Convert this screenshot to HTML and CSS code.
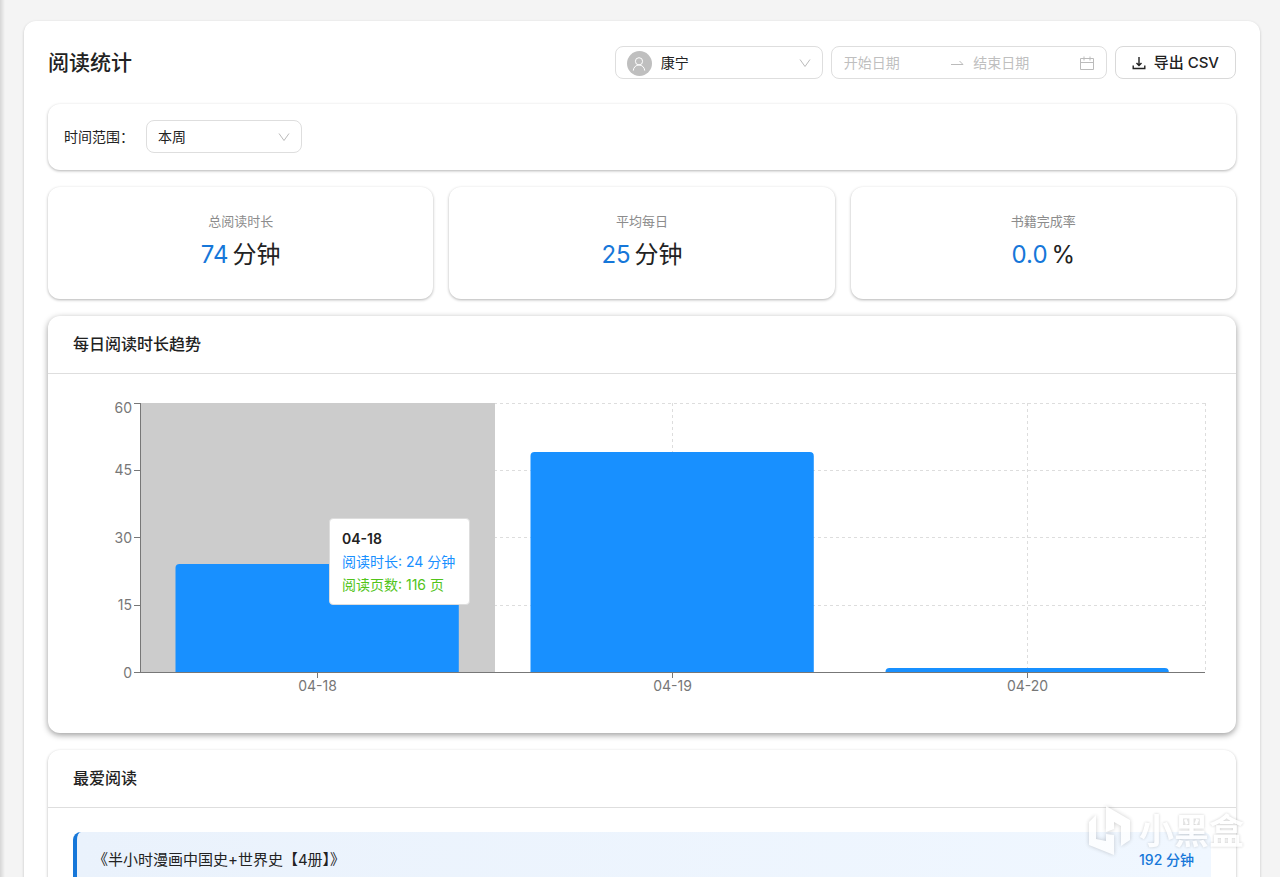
FILE: index.html
```html
<!DOCTYPE html>
<html lang="zh-CN">
<head>
    <meta charset="UTF-8">
    <meta name="viewport" content="width=device-width, initial-scale=1.0">
    <title>阅读统计</title>
    <link rel="stylesheet" href="styles.css">
</head>
<body>
    <main class="container">
        <header class="page-header">
            <h1>阅读统计</h1>
            <div class="toolbar">
                <div class="select-box profile-select">
                    <span class="avatar">
                        <svg viewBox="0 0 16 16" width="16" height="16"><circle cx="8" cy="5.3" r="3.6"/><path d="M2.3 14.6C2.5 11.3 5 9 8 9s5.500 2.300 5.700 5.600"/></svg>
                    </span>
                    <select aria-label="读者">
                        <option>康宁</option>
                    </select>
                    <svg class="chevron" viewBox="0 0 12 12"><path d="M1 2.500l5 7 5-7"/></svg>
                </div>
                <div class="date-range">
                    <input type="text" placeholder="开始日期" aria-label="开始日期">
                    <svg class="range-arrow" viewBox="0 0 14 14"><path d="M1 8.500h12L9.500 5"/></svg>
                    <input type="text" placeholder="结束日期" aria-label="结束日期">
                    <svg class="calendar-icon" viewBox="0 0 14 14"><path d="M.5 2.500h13v11H.5zM.5 6.500h13M4 .5v4M10 .5v4"/></svg>
                </div>
                <button class="export-btn" type="button">
                    <svg viewBox="0 0 14 14"><path d="M7 1v8M4.500 7L7 9.500 9.500 7M1.200 9.500v3h11.600v-3"/></svg>
                    <span>导出 CSV</span>
                </button>
            </div>
        </header>

        <section class="card filter-card">
            <label for="timeRange">时间范围：</label>
            <div class="select-box range-select">
                <select id="timeRange">
                    <option>本周</option>
                </select>
                <svg class="chevron" viewBox="0 0 12 12"><path d="M1 2.500l5 7 5-7"/></svg>
            </div>
        </section>

        <section class="stats">
            <div class="card stat">
                <div class="stat-label">总阅读时长</div>
                <div class="stat-value"><span class="number">74</span><span>分钟</span></div>
            </div>
            <div class="card stat">
                <div class="stat-label">平均每日</div>
                <div class="stat-value"><span class="number">25</span><span>分钟</span></div>
            </div>
            <div class="card stat">
                <div class="stat-label">书籍完成率</div>
                <div class="stat-value"><span class="number">0.0</span><span>%</span></div>
            </div>
        </section>

        <section class="card chart-card">
            <h2>每日阅读时长趋势</h2>
            <div class="chart-body">
                <div class="chart">
                    <svg class="plot" width="100%" height="269">
                        <g class="grid">
                            <line x1="0" y1="0" x2="100%" y2="0"/>
                            <line x1="0" y1="67" x2="100%" y2="67"/>
                            <line x1="0" y1="134" x2="100%" y2="134"/>
                            <line x1="0" y1="202" x2="100%" y2="202"/>
                            <line x1="50%" y1="0" x2="50%" y2="269"/>
                            <line x1="83.333%" y1="0" x2="83.333%" y2="269"/>
                            <line x1="100%" y1="0" x2="100%" y2="269"/>
                        </g>
                        <rect class="cursor" x="0" y="0" width="33.333%" height="269"/>
                        <!-- 内层 svg 裁掉柱子底部的圆角 -->
                        <svg class="bars" width="100%" height="269">
                            <rect x="3.333%" y="161" width="26.600%" height="120" rx="4"/>
                            <rect x="36.666%" y="49" width="26.600%" height="240" rx="4"/>
                            <rect x="70%" y="265" width="26.600%" height="20" rx="4"/>
                        </svg>
                        <g class="axis">
                            <line x1="0" y1="269" x2="100%" y2="269"/>
                            <line x1="0" y1="0" x2="0" y2="269"/>
                            <line x1="-6" y1="0" x2="0" y2="0"/>
                            <line x1="-6" y1="67" x2="0" y2="67"/>
                            <line x1="-6" y1="134" x2="0" y2="134"/>
                            <line x1="-6" y1="202" x2="0" y2="202"/>
                            <line x1="-6" y1="269" x2="0" y2="269"/>
                            <line x1="16.667%" y1="269" x2="16.667%" y2="275"/>
                            <line x1="50%" y1="269" x2="50%" y2="275"/>
                            <line x1="83.333%" y1="269" x2="83.333%" y2="275"/>
                        </g>
                        <g class="y-labels">
                            <text x="-8" y="10">60</text>
                            <text x="-8" y="72">45</text>
                            <text x="-8" y="140">30</text>
                            <text x="-8" y="207">15</text>
                            <text x="-8" y="275">0</text>
                        </g>
                        <g class="x-labels">
                            <text x="16.667%" y="288">04-18</text>
                            <text x="50%" y="288">04-19</text>
                            <text x="83.333%" y="288">04-20</text>
                        </g>
                    </svg>
                    <div class="tooltip">
                        <div class="tooltip-date">04-18</div>
                        <div class="tooltip-time">阅读时长: 24 分钟</div>
                        <div class="tooltip-pages">阅读页数: 116 页</div>
                    </div>
                </div>
            </div>
        </section>

        <section class="card favorite-card">
            <h2>最爱阅读</h2>
            <div class="favorite-body">
                <div class="book">
                    <span>《半小时漫画中国史+世界史【4册】》</span>
                    <span class="book-time">192 分钟</span>
                </div>
            </div>
        </section>
    </main>

    <div class="watermark">
        <svg viewBox="0 0 44 52"><path d="M8 10L1 17v23l25 10V30l-8-1v7L8 34zM18 1l24 14v20l-9 6V21l-7-4v7l-8 3z"/></svg>
        <span>小黑盒</span>
    </div>
</body>
</html>
```
FILE: styles.css
```css
* {
    box-sizing: border-box;
}
html {
    height: 100%;
    overflow: hidden;
}
body {
    font-family: Inter, 'Noto Sans CJK SC', sans-serif;
    font-size: 14px;
    line-height: 22px;
    color: #222;
    background: linear-gradient(90deg, #d6d6d6, #f4f4f4 5px);
    margin: 0;
    padding: 21px 20px 0 24px;
    height: 100%;
    overflow: hidden;
    position: relative;
}
.container {
    background-color: #fff;
    border-radius: 12px;
    box-shadow: 0 1px 3px rgba(0,0,0,0.2);
    padding: 25px 24px;
}
.page-header {
    display: flex;
    justify-content: space-between;
    align-items: flex-start;
    margin-bottom: 24px;
}
h1 {
    font-size: 21px;
    line-height: 34px;
    font-weight: 500;
    margin: 0;
}
.toolbar {
    display: flex;
    gap: 8px;
}
.select-box {
    position: relative;
    display: flex;
    align-items: center;
    height: 33px;
}
.select-box select {
    appearance: none;
    width: 100%;
    height: 100%;
    font: inherit;
    color: inherit;
    background: #fff;
    border: 1px solid #dedede;
    border-radius: 8px;
    padding: 0 30px 0 11px;
}
.chevron {
    position: absolute;
    right: 12px;
    width: 12px;
    height: 12px;
    fill: none;
    stroke: #bbb;
    pointer-events: none;
}
.profile-select {
    width: 208px;
}
.profile-select select {
    padding-left: 45px;
}
.avatar {
    position: absolute;
    left: 12px;
    top: 5px;
    width: 25px;
    height: 25px;
    display: flex;
    align-items: center;
    justify-content: center;
    border-radius: 50%;
    background-color: #bfbfbf;
}
.avatar svg {
    fill: none;
    stroke: #fff;
}
.date-range {
    display: flex;
    align-items: center;
    gap: 9px;
    width: 276px;
    height: 33px;
    padding: 0 12px;
    border: 1px solid #dedede;
    border-radius: 8px;
}
.date-range input {
    flex: 1;
    min-width: 0;
    font: inherit;
    border: none;
    padding: 0;
    outline: none;
}
.date-range input::placeholder {
    color: #bfbfbf;
}
.range-arrow,
.calendar-icon {
    width: 14px;
    height: 14px;
    fill: none;
    stroke: #bbb;
}
.export-btn {
    display: flex;
    align-items: center;
    gap: 8px;
    height: 33px;
    padding: 0 16px;
    font: inherit;
    font-size: 15px;
    font-weight: 500;
    color: inherit;
    background-color: #fff;
    border: 1px solid #d9d9d9;
    border-radius: 8px;
    cursor: pointer;
}
.export-btn svg {
    width: 14px;
    height: 14px;
    fill: none;
    stroke: #222;
    stroke-width: 1.4;
}
.card {
    background-color: #fff;
    border-radius: 12px;
    box-shadow: 0 1px 3px rgba(0,0,0,0.3);
    margin-bottom: 17px;
}
.filter-card {
    display: flex;
    align-items: center;
    gap: 12px;
    padding: 16px 16px 17px;
}
.range-select {
    width: 156px;
}
.stats {
    display: grid;
    grid-template-columns: repeat(3, 1fr);
    gap: 16px;
}
.stat {
    padding: 24px;
    text-align: center;
}
.stat-label {
    font-size: 13px;
    line-height: 20px;
    color: #8c8c8c;
    margin-bottom: 4px;
}
.stat-value {
    display: flex;
    justify-content: center;
    gap: 4px;
    font-size: 24px;
    line-height: 40px;
}
.stat-value .number {
    color: #1677d9;
}
.chart-card {
    box-shadow: 0 2px 6px rgba(0,0,0,0.4);
}
h2 {
    font-size: 16px;
    line-height: 25px;
    font-weight: 500;
    margin: 0;
    padding: 16px 25px;
    border-bottom: 1px solid #dedede;
}
.chart-body {
    padding: 29px 31px 61px 92px;
}
.chart {
    position: relative;
}
.plot {
    display: block;
    overflow: visible;
    font-size: 14px;
}
.grid line {
    stroke: #ddd;
    stroke-dasharray: 3 3;
    shape-rendering: crispEdges;
}
.cursor {
    fill: #ccc;
}
.bars {
    fill: #1890ff;
}
.axis line {
    stroke: #777;
    shape-rendering: crispEdges;
}
.plot text {
    fill: #777;
}
.y-labels {
    text-anchor: end;
}
.x-labels {
    text-anchor: middle;
}
.tooltip {
    position: absolute;
    left: 189px;
    top: 115px;
    padding: 8px 14px 8px 12px;
    line-height: 23px;
    white-space: nowrap;
    background-color: #fff;
    border: 1px solid #ddd;
    border-radius: 4px;
}
.tooltip-date {
    font-weight: 600;
}
.tooltip-time {
    color: #1890ff;
}
.tooltip-pages {
    color: #52c41a;
}
.favorite-body {
    padding: 24px 25px;
}
.book {
    display: flex;
    justify-content: space-between;
    padding: 17px 17px 17px 16px;
    font-size: 15px;
    background: linear-gradient(90deg, #eaf2fc, #f0f7ff);
    border-left: 4px solid #1677d9;
    border-radius: 8px;
}
.book-time {
    font-size: 14px;
    font-weight: 500;
    color: #1677d9;
}
.watermark {
    position: absolute;
    right: 36px;
    bottom: 20px;
    display: flex;
    align-items: center;
    gap: 7px;
    color: #fff;
    font-size: 35px;
    line-height: 52px;
    font-weight: 700;
    text-shadow: 0 0 3px rgba(0,0,0,0.25);
    opacity: 0.8;
    pointer-events: none;
}
.watermark svg {
    width: 44px;
    height: 52px;
    fill: #fff;
    filter: drop-shadow(0 0 2px rgba(0,0,0,0.25));
}
```
